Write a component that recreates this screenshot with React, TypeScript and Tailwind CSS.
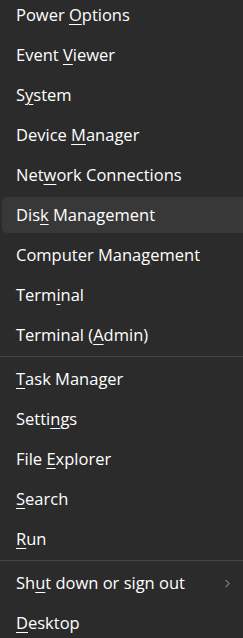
import { ChevronRight } from "lucide-react";

type Item = {
  // label split around the access key
  pre: string;
  key: string;
  post: string;
  sub?: boolean;
  active?: boolean;
};

const groups: Item[][] = [
  [
    { pre: "Power ", key: "O", post: "ptions" },
    { pre: "Event ", key: "V", post: "iewer" },
    { pre: "S", key: "y", post: "stem" },
    { pre: "Device ", key: "M", post: "anager" },
    { pre: "Net", key: "w", post: "ork Connections" },
    { pre: "Dis", key: "k", post: " Management", active: true },
    { pre: "Computer Mana", key: "g", post: "ement" },
    { pre: "Term", key: "i", post: "nal" },
    { pre: "Terminal (", key: "A", post: "dmin)" },
  ],
  [
    { pre: "", key: "T", post: "ask Manager" },
    { pre: "Setti", key: "n", post: "gs" },
    { pre: "File ", key: "E", post: "xplorer" },
    { pre: "", key: "S", post: "earch" },
    { pre: "", key: "R", post: "un" },
  ],
  [
    { pre: "Sh", key: "u", post: "t down or sign out", sub: true },
    { pre: "", key: "D", post: "esktop" },
  ],
];

const MenuRow = ({ item }: { item: Item }) => {
  return (
    <div className="h-[40px] py-[2px] pl-[2px]">
      <div
        className={`h-full flex items-center pl-[14px] pr-[9px] rounded-l-[5px] ${
          item.active ? "bg-[#383838]" : ""
        }`}
      >
        <span className="flex-1 whitespace-nowrap">
          {item.pre}
          <u className="underline-offset-[3px] decoration-[1px]">{item.key}</u>
          {item.post}
        </span>
        {item.sub && (
          <ChevronRight className="w-[13px] h-[13px] text-[#cfcfcf]" strokeWidth={1.5} />
        )}
      </div>
    </div>
  );
};

export default function App() {
  return (
    <div
      className="w-[243px] h-[638px] overflow-hidden bg-[#2b2b2b] text-white text-[16.5px] antialiased"
      style={{ fontFamily: '"Open Sans", "Noto Sans", sans-serif' }}
    >
      <div className="-mt-[5px] flex flex-col">
        {groups.map((group, gi) => (
          <div key={gi}>
            {gi > 0 && (
              <div className="pt-[1px] pb-[2px]">
                <div className="h-px bg-[#454545]" />
              </div>
            )}
            {group.map((item, i) => (
              <MenuRow key={i} item={item} />
            ))}
          </div>
        ))}
      </div>
    </div>
  );
}
